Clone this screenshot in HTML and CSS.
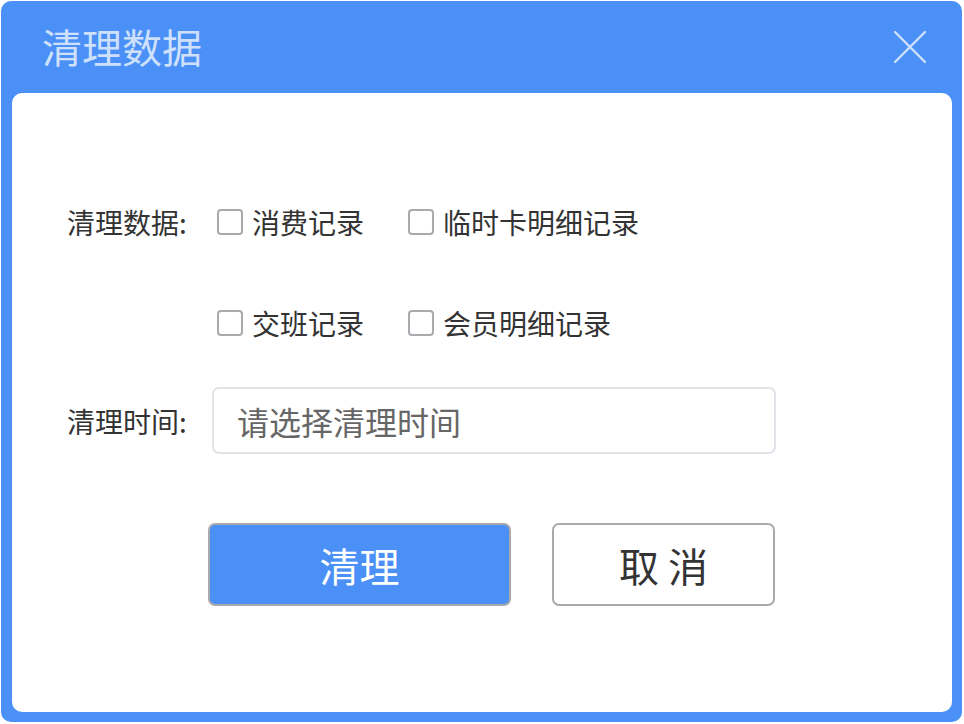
FILE: index.html
```html
<!DOCTYPE html>
<html lang="zh-CN">
<head>
  <meta charset="UTF-8">
  <meta name="viewport" content="width=device-width, initial-scale=1.0">
  <title>清理数据</title>
  <link rel="stylesheet" href="styles.css">
</head>
<body>

<div class="dialog">
  <div class="dialog-header">
    <h1 class="dialog-title">清理数据</h1>
    <span class="close-btn">
      <svg width="32" height="32" viewBox="0 0 32 32">
        <path d="M1 1 L31 31 M31 1 L1 31" stroke="#cfe0fb" stroke-width="2.4" stroke-linecap="round" fill="none"/>
      </svg>
    </span>
  </div>

  <div class="dialog-body">
    <div class="form-row row-first">
      <span class="form-label">清理数据:</span>
      <div class="check-grid">
        <label class="check-item"><span class="check-box"></span>消费记录</label>
        <label class="check-item"><span class="check-box"></span>临时卡明细记录</label>
      </div>
    </div>

    <div class="form-row row-second">
      <span class="form-label"></span>
      <div class="check-grid">
        <label class="check-item"><span class="check-box"></span>交班记录</label>
        <label class="check-item"><span class="check-box"></span>会员明细记录</label>
      </div>
    </div>

    <div class="form-row row-time">
      <span class="form-label label-time">清理时间:</span>
      <div class="time-input">请选择清理时间</div>
    </div>

    <div class="btn-row">
      <button class="btn btn-primary">清理</button>
      <button class="btn btn-cancel">取 消</button>
    </div>
  </div>
</div>

</body>
</html>
```

FILE: styles.css
```css
body {
  font-family: "Noto Sans CJK SC", "Noto Sans", sans-serif;
  margin: 0;
  padding: 1px;
  background-color: #fff;
}

.dialog {
  width: 961px;
  height: 721px;
  box-sizing: border-box;
  background-color: #4a90f7;
  border-radius: 10px;
  padding: 0 10px 10px 11px;
  display: flex;
  flex-direction: column;
}

.dialog-header {
  height: 92px;
  display: flex;
  align-items: center;
  justify-content: space-between;
  padding-left: 30px;
  padding-right: 26px;
}

.dialog-title {
  margin: 0;
  font-size: 40px;
  font-weight: normal;
  color: #cfe0fb;
  line-height: 1;
  margin-top: -2px;
}

.close-btn {
  display: flex;
}

.dialog-body {
  flex: 1;
  background-color: #fff;
  border-radius: 10px;
  padding: 109px 0 0 55px;
}

.form-row {
  display: flex;
  align-items: center;
  font-size: 28px;
  color: #333;
}

.form-label {
  width: 150px;
  flex-shrink: 0;
}

.label-time {
  width: 145px;
}

.row-first {
  height: 40px;
}

.row-second {
  height: 40px;
  margin-top: 61px;
}

.row-time {
  margin-top: 44px;
}

.check-grid {
  display: grid;
  grid-template-columns: 191px auto;
}

.check-item {
  display: flex;
  align-items: center;
}

.check-box {
  width: 26px;
  height: 26px;
  box-sizing: border-box;
  border: 2px solid #a9a9ae;
  border-radius: 4px;
  margin-right: 9px;
}

.time-input {
  width: 564px;
  height: 67px;
  box-sizing: border-box;
  border: 2px solid #e2e2e8;
  border-radius: 7px;
  padding-left: 23px;
  display: flex;
  align-items: center;
  font-size: 32px;
  color: #666;
}

.btn-row {
  display: flex;
  gap: 41px;
  margin-top: 69px;
  padding-left: 141px;
}

.btn {
  height: 83px;
  border: 2px solid #aaaaae;
  border-radius: 7px;
  font-family: inherit;
  font-size: 40px;
  cursor: pointer;
}

.btn-primary {
  width: 303px;
  background-color: #4a90f7;
  color: #fff;
}

.btn-cancel {
  width: 223px;
  background-color: #fff;
  color: #333;
}
```
